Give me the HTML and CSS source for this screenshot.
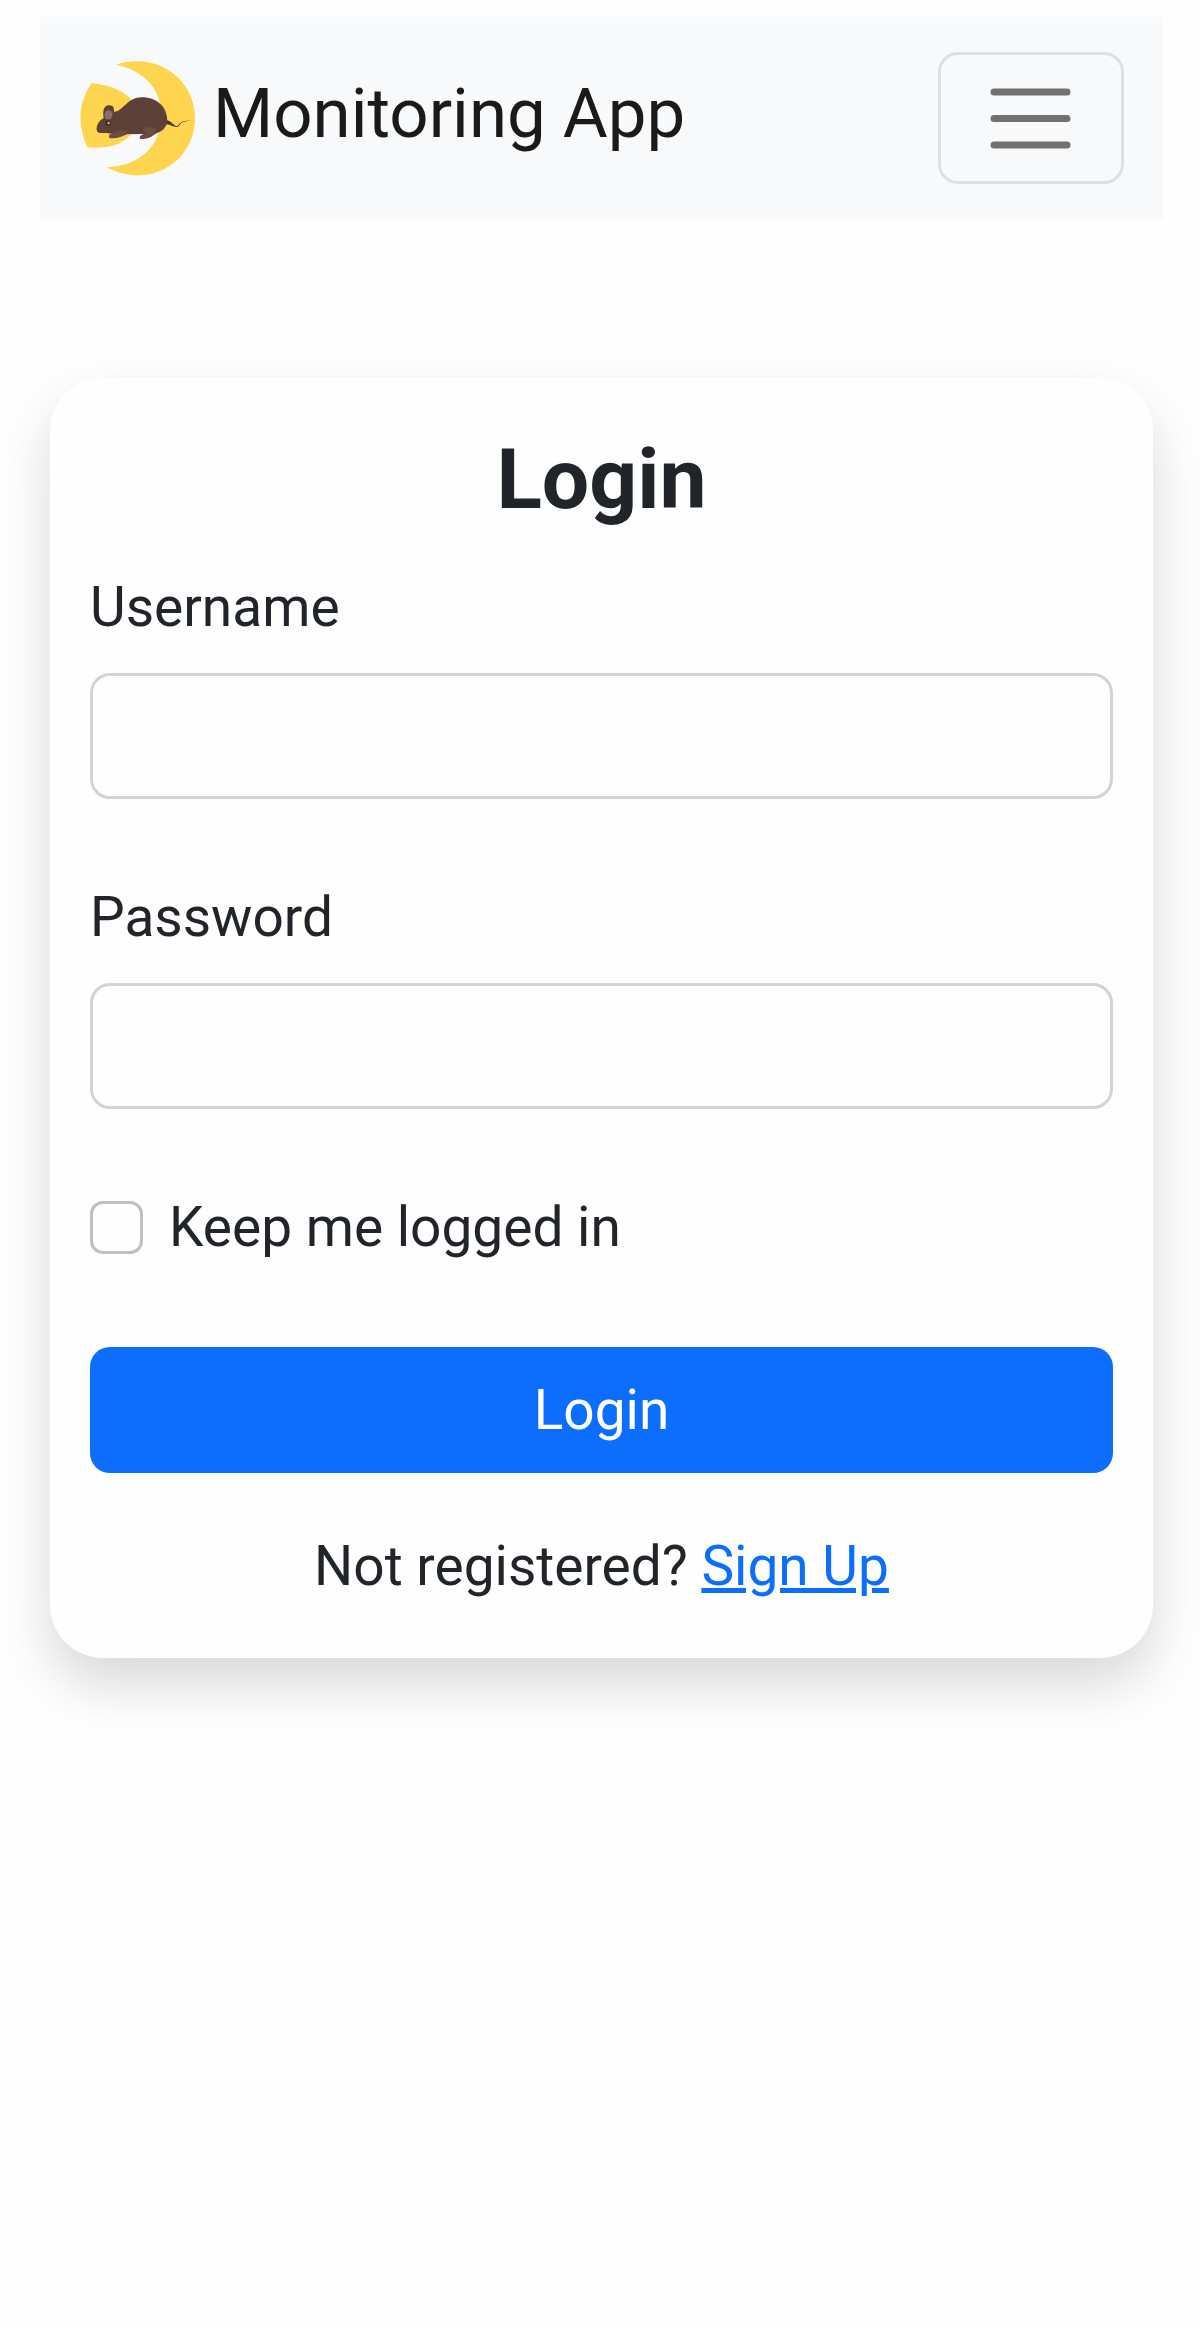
FILE: index.html
```html
<!DOCTYPE html>
<html lang="en">
<head>
<meta charset="utf-8">
<meta name="viewport" content="width=device-width, initial-scale=1">
<title>Monitoring App</title>
<link rel="stylesheet" href="styles.css">
</head>
<body>
<header class="navbar">
  <a class="brand" href="#">
    <svg class="brand-logo" viewBox="60 59 345 348" aria-hidden="true">
      <path fill="#ffd54f" d="M167 73C290 32 405 115 405 233C405 365 268 449 140 381C235 378 304 320 304 225C304 140 245 88 167 73Z"/>
      <path fill="#ffd54f" d="M95 128C150 134 190 150 216 180L220 270C200 310 150 327 82 321C52 255 53 190 95 128Z"/>
      <path fill="#4e342e" d="M316 238C335 240 343 260 353 257C362 241 378 242 395 240C376 244 366 243 357 256C346 268 333 250 318 252Z"/>
      <path fill="#5d4037" d="M110 263C112 248 120 240 131 233C128 216 130 196 145 195C160 194 163 203 162 214C188 216 200 171 246 171C292 171 322 200 322 243C319 264 305 273 290 279C278 284 272 297 242 296C235 292 240 285 253 281L200 282C188 288 176 294 150 293C144 288 148 283 156 280C140 278 118 282 112 273Z"/>
      <path fill="#6d4c41" d="M148 284C158 281 169 270 188 269C197 270 204 274 198 280C185 289 166 296 149 293ZM240 293C239 284 254 283 259 277C251 275 245 268 251 262C265 257 285 262 292 269C280 277 272 298 240 293Z"/>
      <path fill="#8d6e63" d="M135 234C132 217 136 209 146 210C158 210 161 222 154 233C148 240 140 238 135 234Z"/>
      <path fill="#4e342e" d="M110 263C114 267 115 272 121 277C113 278 110 271 110 263Z"/>
      <circle cx="145" cy="248" r="8" fill="#3e2723"/>
      <circle cx="146" cy="248" r="4" fill="#bcaaa4"/>
    </svg>
    <span class="brand-name">Monitoring App</span>
  </a>
  <button class="toggler" type="button" aria-label="Toggle navigation">
    <svg class="toggler-icon" viewBox="0 0 100 100" aria-hidden="true">
      <path d="M13 24H86M13 50.500H86M13 77H86" fill="none" stroke="#717171" stroke-width="7" stroke-linecap="round"/>
    </svg>
  </button>
</header>
<main class="page">
  <form class="card">
    <h1 class="title">Login</h1>
    <div class="field">
      <label for="username">Username</label>
      <input class="control" id="username" type="text">
    </div>
    <div class="field">
      <label for="password">Password</label>
      <input class="control" id="password" type="password">
    </div>
    <div class="check">
      <input class="check-box" id="keep" type="checkbox">
      <label for="keep">Keep me logged in</label>
    </div>
    <button class="submit" type="submit">Login</button>
    <p class="signup">Not registered? <a href="#">Sign Up</a></p>
  </form>
</main>
</body>
</html>
```
FILE: styles.css
```css
* {
  box-sizing: border-box;
}

body {
  min-height: 100vh;
  margin: 0;
  padding: 17px 37px 80px 40px;
  background: #fefefe;
  color: #212529;
  font-family: Roboto, "Open Sans", sans-serif;
  font-size: 55px;
  line-height: 80px;
}

.navbar {
  display: flex;
  align-items: center;
  justify-content: space-between;
  padding: 35px 39px 35px 40px;
  background: #f8f9fb;
}

.brand {
  display: flex;
  align-items: center;
  gap: 18px;
  color: #1a1a1a;
  font-size: 69px;
  text-decoration: none;
}

.brand-logo {
  width: 115px;
  height: 116px;
}

.brand-name {
  padding-bottom: 8px;
}

.toggler {
  display: flex;
  align-items: center;
  justify-content: center;
  width: 186px;
  height: 132px;
  padding: 0;
  border: 3px solid #dedfe1;
  border-radius: 20px;
  background: transparent;
}

.toggler-icon {
  width: 100px;
  height: 100px;
}

.page {
  padding: 159px 10px 0;
}

.card {
  display: flex;
  flex-direction: column;
  padding: 54px 40px 52px;
  border-radius: 53px;
  background: #fefefe;
  box-shadow: 0 27px 53px rgba(0, 0, 0, 0.15);
}

.title {
  margin: 0 0 39px;
  font-size: 84px;
  font-weight: 700;
  line-height: 96px;
  text-align: center;
}

.field {
  display: flex;
  flex-direction: column;
  gap: 26px;
  margin-bottom: 78px;
}

.control {
  width: 100%;
  height: 126px;
  padding: 20px 40px;
  border: 3px solid #d0d3d8;
  border-radius: 20px;
  background: #fefefe;
  color: inherit;
  font: inherit;
}

.check {
  display: flex;
  align-items: center;
  gap: 26px;
  margin-bottom: 80px;
}

.check-box {
  width: 53px;
  height: 53px;
  margin: 0;
  border: 3px solid #bfbfbf;
  border-radius: 13px;
  background: #fefefe;
  appearance: none;
}

.check-box:checked {
  border-color: #0d6efd;
  background: #0d6efd;
}

.submit {
  height: 126px;
  padding: 0 40px;
  border: 0;
  border-radius: 20px;
  background: #0d6efd;
  color: #fefefe;
  font: inherit;
}

.signup {
  margin: 53px 0 0;
  text-align: center;
}

.signup a {
  color: #0d6efd;
}
```
